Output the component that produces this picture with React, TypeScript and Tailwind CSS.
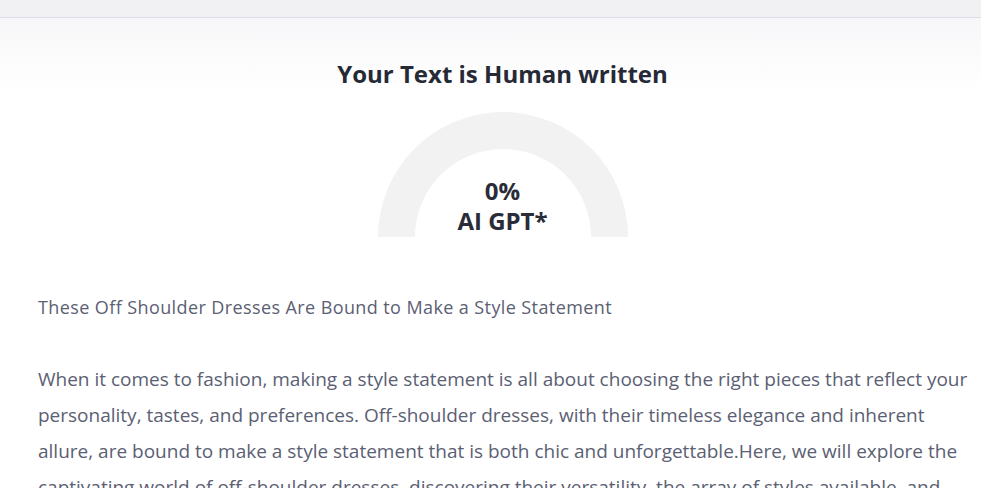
import React from "react";

export default function App() {
  const body =
    "When it comes to fashion, making a style statement is all about choosing the right pieces that reflect your personality, tastes, and preferences. Off-shoulder dresses, with their timeless elegance and inherent allure, are bound to make a style statement that is both chic and unforgettable.Here, we will explore the captivating world of off-shoulder dresses, discovering their versatility, the array of styles available, and";
  return (
    <div
      className="w-[981px] h-[488px] overflow-hidden bg-white"
      style={{ fontFamily: '"Open Sans", "Noto Sans", sans-serif' }}
    >
      <div className="h-[18px] bg-[#f1f1f4] border-b border-[#dcdde9]" />
      <div className="pl-[38px] pr-[14px] bg-gradient-to-b from-[#f7f7f9] to-white">
        <div className="pt-[40px] flex flex-col items-center">
          <h1 className="text-[24px] leading-[32px] font-bold text-[#262936]">
            Your Text is Human written
          </h1>
        </div>
      </div>
      <div className="pl-[38px] pr-[14px]">
        <div className="flex justify-center mt-[22px]">
          <div className="relative w-[250px] h-[125px]">
            <svg width="250" height="125" viewBox="0 0 250 125" className="block">
              <path
                d="M0 125 A125 125 0 0 1 250 125 L213 125 A88 88 0 0 0 37 125 Z"
                fill="#f2f2f3"
              />
            </svg>
            <div className="absolute left-0 right-0 top-[64px] flex flex-col items-center text-[24px] leading-[30px] font-bold text-[#2a2c38]">
              <span>0%</span>
              <span>AI GPT*</span>
            </div>
          </div>
        </div>
        <div className="text-[#5b6073]">
          <p className="mt-[55px] leading-[30px] text-[18px] tracking-[0.4px]">
            These Off Shoulder Dresses Are Bound to Make a Style Statement
          </p>
          <p className="mt-[39px] leading-[36px] text-[19px] -mr-[8px]">
            {body}
          </p>
        </div>
      </div>
    </div>
  );
}
